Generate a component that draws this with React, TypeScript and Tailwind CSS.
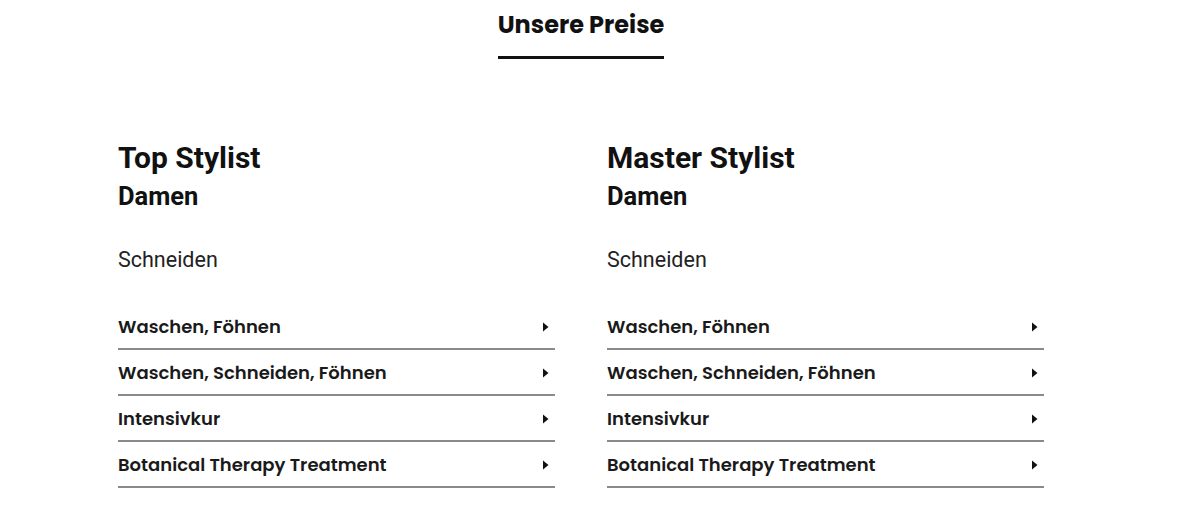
import React from 'react';

interface PriceColumn {
  title: string;
  group: string;
  first: string;
  items: string[];
}

const columns: PriceColumn[] = [
  {
    title: 'Top Stylist',
    group: 'Damen',
    first: 'Schneiden',
    items: ['Waschen, Föhnen', 'Waschen, Schneiden, Föhnen', 'Intensivkur', 'Botanical Therapy Treatment'],
  },
  {
    title: 'Master Stylist',
    group: 'Damen',
    first: 'Schneiden',
    items: ['Waschen, Föhnen', 'Waschen, Schneiden, Föhnen', 'Intensivkur', 'Botanical Therapy Treatment'],
  },
];

const Caret: React.FC = () => (
  <svg width="7" height="10" viewBox="0 0 7 10" className="mr-[6px] shrink-0">
    <path d="M1 0.5 L6.5 5 L1 9.5 Z" fill="#111" />
  </svg>
);

const App: React.FC = () => {
  return (
    <div className="min-h-[508px] w-[1162px] bg-white pt-[10px] text-[#111]">
      {/* Section heading */}
      <div className="flex flex-col items-center">
        <h2 className="font-['Poppins','Inter',sans-serif] text-[24px] font-bold leading-[30px]">
          Unsere Preise
        </h2>
        <div className="mt-[16px] h-[3px] w-[166px] bg-[#111]" />
      </div>

      {/* Price columns */}
      <div className="mt-[81px] flex justify-center gap-[52px]">
        {columns.map((col) => (
          <div key={col.title} className="w-[437px]">
            <h3 className="font-['Roboto',sans-serif] text-[30px] font-bold leading-[36px]">{col.title}</h3>
            <h4 className="mt-[5px] font-['Roboto',sans-serif] text-[25.5px] font-bold leading-[30px]">{col.group}</h4>
            <p className="mt-[36px] font-['Roboto',sans-serif] text-[21.5px] font-normal leading-[26px] text-[#222]">
              {col.first}
            </p>
            <ul className="mt-[31px]">
              {col.items.map((item) => (
                <li
                  key={item}
                  className="flex items-center justify-between border-b-2 border-[#8a8a8a] pb-[8px] pt-[10px]"
                >
                  <span className="font-['Poppins','Inter',sans-serif] text-[18px] font-semibold leading-[26px] text-[#1a1a1a]">
                    {item}
                  </span>
                  <Caret />
                </li>
              ))}
            </ul>
          </div>
        ))}
      </div>
    </div>
  );
};

export default App;
